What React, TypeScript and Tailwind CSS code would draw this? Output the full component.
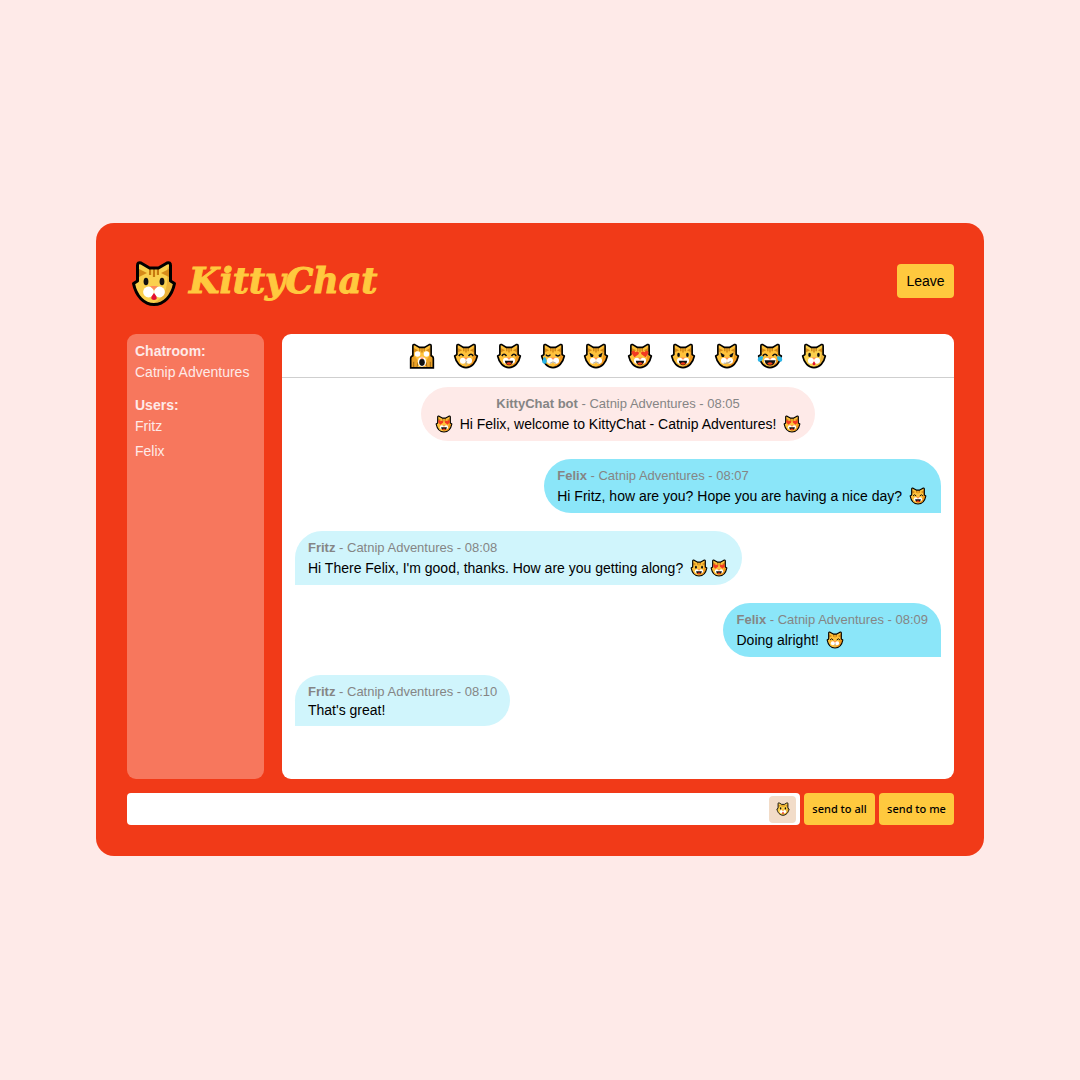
import React from "react";

type Mood =
  | "weary"
  | "kiss"
  | "grin"
  | "cry"
  | "pout"
  | "love"
  | "smile"
  | "smirk"
  | "joy"
  | "face";

const HEAD =
  "M6.5 21V5.5Q6.5 1.8 10 3L18.5 8H27.5L36 3Q39.5 1.8 39.5 5.5V21L43.5 23.5C41 36 33 44.5 23 44.5C13 44.5 5 36 2.5 23.5Z";

const HEART = "M0 5L-5.5 -0.5C-7.5 -4 -2.5 -6.5 0 -3C2.5 -6.5 7.5 -4 5.5 -0.5Z";

function Muzzle() {
  return (
    <g fill="#fff">
      <circle cx="17.5" cy="32" r="5.4" />
      <circle cx="28.5" cy="32" r="5.4" />
    </g>
  );
}

function DotEyes() {
  return (
    <g fill="#111">
      <ellipse cx="15" cy="21.5" rx="2.4" ry="3.8" />
      <ellipse cx="31" cy="21.5" rx="2.4" ry="3.8" />
    </g>
  );
}

function ArcEyes({ down = false }: { down?: boolean }) {
  return (
    <path
      d={down ? "M10 21Q14 26 18.5 21M27.5 21Q32 26 36 21" : "M10 23.5Q14 17 18.5 23.5M27.5 23.5Q32 17 36 23.5"}
      fill="none"
      stroke="#111"
      strokeWidth="2.6"
    />
  );
}

function AngryEyes() {
  return (
    <g fill="#111">
      <path d="M11 17L18.5 21.5L17.5 25.5H13.5Z" />
      <path d="M35 17L27.5 21.5L28.5 25.5H32.5Z" />
    </g>
  );
}

function OpenMouth({ wide = false }: { wide?: boolean }) {
  return (
    <g>
      <path d={wide ? "M13 31H33Q31 40.5 23 40.5T13 31Z" : "M15.5 32H30.5Q29.5 40 23 40T15.5 32Z"} fill="#111" />
      <path d="M18 37Q23 33 28 37Q26 39.5 23 39.5T18 37Z" fill="#f03a17" />
    </g>
  );
}

function Cat({ mood, className }: { mood: Mood; className: string }) {
  const fur = mood === "face" ? "#fad04d" : "#ffc23c";
  const shade = mood === "face" ? "#ebb33a" : "#f0981d";
  return (
    <svg viewBox="0 0 46 47" className={className} role="img" aria-label={`${mood} cat`}>
      <path d={HEAD} fill={fur} />
      <path d="M36 9L38 6V22L42 25C40 38 32 43 23 43C32 38 38 30 36 9Z" fill={shade} />
      <path d="M8 9L16 13L8 17ZM38 9L30 13L38 17Z" fill="#d68b19" />
      <path d="M18 9H20.2V15H18ZM21.9 9H24.1V17H21.9ZM25.8 9H28V15H25.8Z" fill="#c7790f" />
      {mood === "weary" ? (
        <g>
          <circle cx="15" cy="20" r="5" fill="#fff" />
          <circle cx="31" cy="20" r="5" fill="#fff" />
          <path d="M3 45V25Q3 23 7 23Q14 26 15 34L14 45ZM43 45V25Q43 23 39 23Q32 26 31 34L32 45Z" fill="#e9a025" />
          <path d="M14 45L15.5 35M32 45L30.5 35M8 34V44M38 34V44" fill="none" stroke="#8a5a10" strokeWidth="1.5" />
          <path
            d="M6.5 23V5.5Q6.5 1.8 10 3L18.5 8H27.5L36 3Q39.5 1.8 39.5 5.5V23Q43.5 24 43.5 28V45H2.5V28Q2.5 24 6.5 23Z"
            fill="none"
            stroke="#000"
            strokeWidth="3"
          />
          <ellipse cx="23" cy="34" rx="7.5" ry="9" fill="#fff" />
          <ellipse cx="23" cy="35" rx="5" ry="6.5" fill="#111" />
        </g>
      ) : (
        <path d={HEAD} fill="none" stroke="#000" strokeWidth="3" strokeLinejoin="round" />
      )}
      {mood !== "weary" && <Muzzle />}
      <path d="M19 26H27L23 30Z" fill="#ff8a5c" />
      {(mood === "face" || mood === "smile") && <DotEyes />}
      {(mood === "kiss" || mood === "grin" || mood === "joy") && <ArcEyes />}
      {mood === "cry" && <ArcEyes down />}
      {(mood === "pout" || mood === "smirk") && <AngryEyes />}
      {mood === "love" && (
        <g fill="#f23a22">
          <path d={HEART} transform="translate(14 20) rotate(10) scale(1.15)" />
          <path d={HEART} transform="translate(32 20) rotate(-10) scale(1.15)" />
        </g>
      )}
      {mood === "face" && <path d="M23 33Q26.5 37 25.5 39Q23 41 20.5 39Q19.5 37 23 33Z" fill="#e20f35" />}
      {(mood === "grin" || mood === "smile" || mood === "love") && <OpenMouth />}
      {mood === "joy" && (
        <g>
          <OpenMouth wide />
          <path d="M10 24Q0 23 1 31Q3 36 8 32Q11 28 10 24ZM36 24Q46 23 45 31Q43 36 38 32Q35 28 36 24Z" fill="#28b5e8" />
        </g>
      )}
      {mood === "cry" && <path d="M8 25Q14 33 10.5 36.5Q7 39 4 35.5Q2 32 8 25Z" fill="#28b5e8" />}
      {(mood === "cry" || mood === "pout") && (
        <path d="M18 37Q23 31.5 28 37" fill="none" stroke="#aaa" strokeWidth="2" />
      )}
      {mood === "kiss" && <path d="M22 32L25 34L22 36L25 38L22 40" fill="none" stroke="#aaa" strokeWidth="1.5" />}
      {mood === "smirk" && <path d="M17 36Q25 38 30 33" fill="none" stroke="#aaa" strokeWidth="2" />}
    </svg>
  );
}

const PICKER: Mood[] = ["weary", "kiss", "grin", "cry", "pout", "love", "smile", "smirk", "joy", "face"];

const USERS = ["Fritz", "Felix"];

type Message = { author: string; time: string; side: "bot" | "mine" | "theirs"; before?: Mood[]; text: string; after?: Mood[] };

const MESSAGES: Message[] = [
  {
    author: "KittyChat bot",
    time: "08:05",
    side: "bot",
    before: ["love"],
    text: "Hi Felix, welcome to KittyChat - Catnip Adventures!",
    after: ["love"],
  },
  { author: "Felix", time: "08:07", side: "mine", text: "Hi Fritz, how are you? Hope you are having a nice day?", after: ["grin"] },
  {
    author: "Fritz",
    time: "08:08",
    side: "theirs",
    text: "Hi There Felix, I'm good, thanks. How are you getting along?",
    after: ["smile", "love"],
  },
  { author: "Felix", time: "08:09", side: "mine", text: "Doing alright!", after: ["kiss"] },
  { author: "Fritz", time: "08:10", side: "theirs", text: "That's great!" },
];

const BUBBLE = {
  bot: "self-center rounded-[27px] bg-[#feeae8] text-center",
  mine: "self-end rounded-[27px] rounded-br-none bg-[#8be6f9]",
  theirs: "self-start rounded-[27px] rounded-bl-none bg-[#d0f5fc]",
};

function Emojis({ moods }: { moods: Mood[] }) {
  return (
    <span className="flex">
      {moods.map((m) => (
        <Cat key={m} mood={m} className="mx-px size-[18px]" />
      ))}
    </span>
  );
}

function Bubble({ message }: { message: Message }) {
  const { author, time, side, before, text, after } = message;
  return (
    <li className={`px-[13px] pt-[9px] pb-[5px] ${BUBBLE[side]}`}>
      <p className="text-[13px] leading-4 text-[#858585]">
        <b>{author}</b> - Catnip Adventures - {time}
      </p>
      <div className={`flex items-center gap-1.5 ${after ? "leading-6" : "leading-[21px]"}`}>
        {before && <Emojis moods={before} />}
        <p>{text}</p>
        {after && <Emojis moods={after} />}
      </div>
    </li>
  );
}

export default function App() {
  return (
    <div className="flex min-h-screen items-center justify-center bg-[#feeae8] px-6 pb-px font-['Liberation_Sans',Arial,sans-serif] text-[14px] text-black">
      <div className="w-full max-w-[888px] rounded-[18px] bg-[#f13a18] pt-[37px] pr-[30px] pb-[31px] pl-[31px]">
        <header className="flex items-start justify-between">
          <div className="flex items-center gap-3 pl-1">
            <Cat mood="face" className="h-[47px] w-[46px]" />
            <h1 className="pb-1.5 font-['DejaVu_Serif',serif] text-[35px] leading-9 font-bold text-[#ffc93e] italic [-webkit-text-stroke:1px_#ffc93e]">
              KittyChat
            </h1>
          </div>
          <button type="button" className="mt-1 h-[34px] w-[57px] rounded bg-[#ffc93e]">
            Leave
          </button>
        </header>

        <main className="mt-[27px] flex min-h-[445px] items-stretch gap-[18px]">
          <aside className="w-[137px] shrink-0 rounded-[9px] bg-[#f7775d] px-2 pt-[7px] leading-5 text-[#feeae8]">
            <h2 className="font-bold">Chatroom:</h2>
            <p className="mt-px whitespace-nowrap">Catnip Adventures</p>
            <h2 className="mt-[13px] font-bold">Users:</h2>
            <ul className="mt-px flex flex-col gap-[5px]">
              {USERS.map((u) => (
                <li key={u}>{u}</li>
              ))}
            </ul>
          </aside>

          <section className="flex min-w-0 grow flex-col rounded-[9px] bg-white">
            <div className="flex h-11 items-center justify-center border-b border-[#cfcfcf]">
              <div className="flex w-[418px] justify-between">
                {PICKER.map((m) => (
                  <button key={m} type="button" className="flex w-[26px] justify-center">
                    <Cat mood={m} className="size-[26px]" />
                  </button>
                ))}
              </div>
            </div>
            <ul className="flex flex-col gap-[18px] px-[13px] pt-[9px]">
              {MESSAGES.map((m) => (
                <Bubble key={m.time} message={m} />
              ))}
            </ul>
          </section>
        </main>

        <form
          className="mt-3.5 flex h-8 gap-1 font-['Noto_Sans',sans-serif] text-[11px] font-medium"
          onSubmit={(e) => e.preventDefault()}
        >
          <div className="flex min-w-0 grow items-center rounded bg-white pr-1">
            <input type="text" aria-label="Message" className="h-full min-w-0 grow bg-transparent px-2 outline-none" />
            <button type="button" aria-label="Insert emoji" className="flex size-[27px] items-center justify-center rounded bg-[#f2dcc8]">
              <Cat mood="face" className="size-3.5" />
            </button>
          </div>
          <button type="submit" className="w-[71px] whitespace-nowrap rounded bg-[#ffc93e]">
            send to all
          </button>
          <button type="button" className="w-[75px] whitespace-nowrap rounded bg-[#ffc93e]">
            send to me
          </button>
        </form>
      </div>
    </div>
  );
}
